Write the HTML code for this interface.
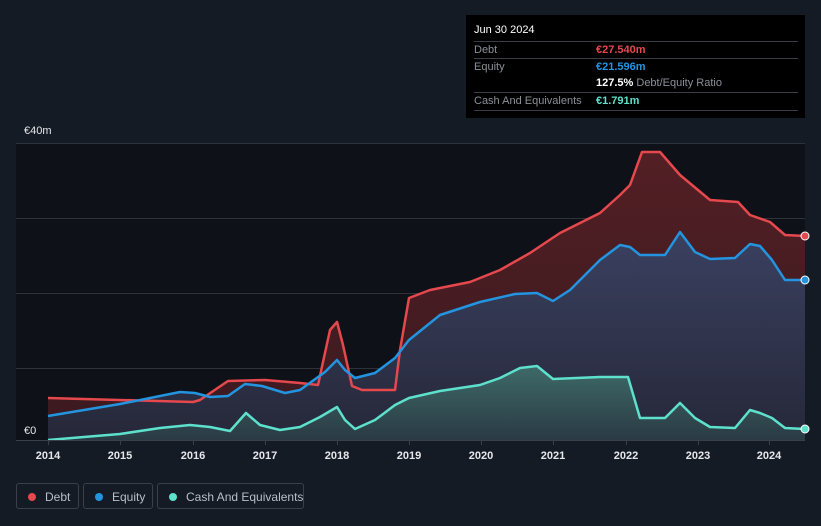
<!DOCTYPE html>
<html><head><style>
body{margin:0;width:821px;height:526px;background:#151b25;font-family:"Liberation Sans",sans-serif;overflow:hidden;position:relative}
.tt{position:absolute;left:466px;top:15px;width:339px;height:103px;background:#000;color:#8a8f98;font-size:11px}
.tt .r{position:absolute;left:8px;width:324px;border-top:1px solid #3a3d44;height:17px;line-height:17px;white-space:nowrap}
.lg{position:absolute;top:483px;height:26px;border:1px solid #3a404b;border-radius:3px;color:#b9bec7;font-size:12px;line-height:26px;box-sizing:border-box;white-space:nowrap}
.lg i{position:absolute;left:11px;top:9px;width:8px;height:8px;border-radius:50%}
.ax{position:absolute;top:450px;color:#e6e8eb;font-size:11px;font-weight:bold;transform:translateX(-50%)}
</style></head><body>
<svg width="821" height="526" style="position:absolute;left:0;top:0">
<defs>
<linearGradient id="gd" x1="0" y1="0" x2="0" y2="1"><stop offset="0" stop-color="#521f24"/><stop offset="1" stop-color="#3a1a20"/></linearGradient>
<linearGradient id="ge" x1="0" y1="0" x2="0" y2="1"><stop offset="0" stop-color="#3a4060"/><stop offset="1" stop-color="#262839"/></linearGradient>
<linearGradient id="gc" x1="0" y1="0" x2="0" y2="1"><stop offset="0" stop-color="#3e6a68"/><stop offset="1" stop-color="#2a3a44"/></linearGradient>
</defs>
<rect x="16" y="143" width="789" height="297" fill="#0e1117"/>
<g stroke="#2e323a" stroke-width="1"><line x1="16" y1="143.5" x2="805" y2="143.5"/><line x1="16" y1="218.5" x2="805" y2="218.5"/><line x1="16" y1="293.5" x2="805" y2="293.5"/><line x1="16" y1="368.5" x2="805" y2="368.5"/></g>
<polygon fill="url(#gd)" points="48,440 48,398 193,402 200,400 228,381 265,380 300,383 318,385 330,330 337,322 343,345 352,386 362,390 395,390 400,350 409,298 430,290 470,282 500,270 530,253 560,233 600,213 620,195 630,185 642,152 660,152 680,175 710,200 738,202 750,215 770,222 785,235 805,236 805,440"/>
<polygon fill="url(#ge)" points="48,440 48,416 120,404 180,392 195,393 210,397 228,396 245,384 262,386 285,393 300,390 325,372 337,360 345,370 355,378 375,373 395,358 409,340 440,315 480,302 515,294 537,293 553,301 570,290 600,260 620,245 630,247 640,255 665,255 680,232 695,252 710,259 735,258 750,244 760,246 772,260 785,280 805,280 805,440"/>
<polygon fill="url(#gc)" points="48,440 48,440 120,434 160,428 190,425 210,427 230,431 246,413 260,425 280,430 300,427 320,417 337,407 345,420 355,429 375,420 395,405 409,398 440,391 480,385 500,378 520,368 537,366 553,379 600,377 628,377 640,418 665,418 680,403 695,418 710,427 735,428 750,410 760,413 772,418 785,428 805,429 805,440"/>
<g fill="none" stroke-width="2.5" stroke-linejoin="round">
<polyline stroke="#e5484d" points="48,398 193,402 200,400 228,381 265,380 300,383 318,385 330,330 337,322 343,345 352,386 362,390 395,390 400,350 409,298 430,290 470,282 500,270 530,253 560,233 600,213 620,195 630,185 642,152 660,152 680,175 710,200 738,202 750,215 770,222 785,235 805,236"/>
<polyline stroke="#2394e0" points="48,416 120,404 180,392 195,393 210,397 228,396 245,384 262,386 285,393 300,390 325,372 337,360 345,370 355,378 375,373 395,358 409,340 440,315 480,302 515,294 537,293 553,301 570,290 600,260 620,245 630,247 640,255 665,255 680,232 695,252 710,259 735,258 750,244 760,246 772,260 785,280 805,280"/>
<polyline stroke="#5de0cc" points="48,440 120,434 160,428 190,425 210,427 230,431 246,413 260,425 280,430 300,427 320,417 337,407 345,420 355,429 375,420 395,405 409,398 440,391 480,385 500,378 520,368 537,366 553,379 600,377 628,377 640,418 665,418 680,403 695,418 710,427 735,428 750,410 760,413 772,418 785,428 805,429"/>
</g>
<circle cx="805" cy="236" r="4" fill="#e5484d" stroke="#fff" stroke-width="1"/>
<circle cx="805" cy="280" r="4" fill="#2394e0" stroke="#fff" stroke-width="1"/>
<circle cx="805" cy="429" r="4" fill="#5de0cc" stroke="#fff" stroke-width="1"/>
<line x1="16" y1="440.5" x2="805" y2="440.5" stroke="#3a3f48"/>
<g stroke="#3a3f48"><line x1="48.5" y1="440" x2="48.5" y2="445"/><line x1="120.5" y1="440" x2="120.5" y2="445"/><line x1="193.5" y1="440" x2="193.5" y2="445"/><line x1="265.5" y1="440" x2="265.5" y2="445"/><line x1="337.5" y1="440" x2="337.5" y2="445"/><line x1="409.5" y1="440" x2="409.5" y2="445"/><line x1="481.5" y1="440" x2="481.5" y2="445"/><line x1="553.5" y1="440" x2="553.5" y2="445"/><line x1="626.5" y1="440" x2="626.5" y2="445"/><line x1="698.5" y1="440" x2="698.5" y2="445"/><line x1="769.5" y1="440" x2="769.5" y2="445"/></g>
</svg>
<div style="position:absolute;left:24px;top:125px;color:#e6e8eb;font-size:11px">€40m</div>
<div style="position:absolute;left:24px;top:425px;color:#e6e8eb;font-size:11px">€0</div>
<div class="ax" style="left:48px">2014</div><div class="ax" style="left:120px">2015</div><div class="ax" style="left:193px">2016</div><div class="ax" style="left:265px">2017</div><div class="ax" style="left:337px">2018</div><div class="ax" style="left:409px">2019</div><div class="ax" style="left:481px">2020</div><div class="ax" style="left:553px">2021</div><div class="ax" style="left:626px">2022</div><div class="ax" style="left:698px">2023</div><div class="ax" style="left:769px">2024</div>
<div class="tt">
<div style="position:absolute;left:8px;top:9px;color:#fff;font-size:11px">Jun 30 2024</div>
<div class="r" style="top:26px">Debt<span style="position:absolute;left:122px;color:#e5484d;font-weight:bold">€27.540m</span></div>
<div class="r" style="top:43px">Equity<span style="position:absolute;left:122px;color:#2394e0;font-weight:bold">€21.596m</span></div>
<div class="r" style="top:60px;border:0"><span style="position:absolute;left:122px"><b style="color:#fff">127.5%</b> Debt/Equity Ratio</span></div>
<div class="r" style="top:77px">Cash And Equivalents<span style="position:absolute;left:122px;color:#5de0cc;font-weight:bold">€1.791m</span></div>
<div class="r" style="top:95px;height:0"></div>
</div>
<div class="lg" style="left:16px;width:63px"><i style="background:#e5484d"></i><span style="position:absolute;left:28px">Debt</span></div>
<div class="lg" style="left:83px;width:70px"><i style="background:#2394e0"></i><span style="position:absolute;left:28px">Equity</span></div>
<div class="lg" style="left:157px;width:147px"><i style="background:#5de0cc"></i><span style="position:absolute;left:28px">Cash And Equivalents</span></div>
</body></html>
